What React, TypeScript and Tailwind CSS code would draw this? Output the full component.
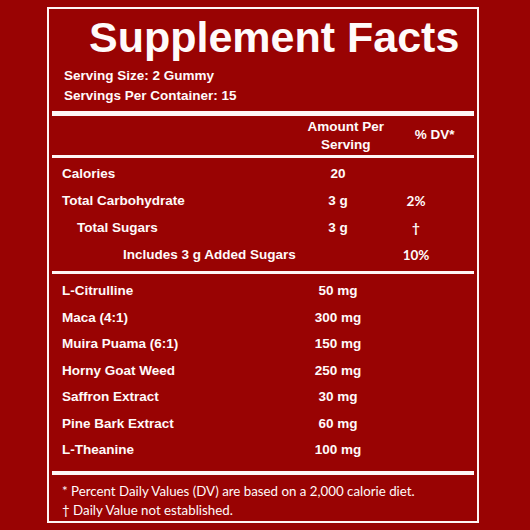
const facts = [
  { label: 'Calories', amount: '20', dv: '', indent: 'pl-[10px]' },
  { label: 'Total Carbohydrate', amount: '3 g', dv: '2%', indent: 'pl-[10px]' },
  { label: 'Total Sugars', amount: '3 g', dv: '†', indent: 'pl-[25px]' },
  { label: 'Includes 3 g Added Sugars', amount: '', dv: '10%', indent: 'pl-[71px]' },
];

const ingredients = [
  { label: 'L-Citrulline', amount: '50 mg' },
  { label: 'Maca (4:1)', amount: '300 mg' },
  { label: 'Muira Puama (6:1)', amount: '150 mg' },
  { label: 'Horny Goat Weed', amount: '250 mg' },
  { label: 'Saffron Extract', amount: '30 mg' },
  { label: 'Pine Bark Extract', amount: '60 mg' },
  { label: 'L-Theanine', amount: '100 mg' },
];

export default function App() {
  return (
    <div className="w-[530px] h-[530px] bg-[#990303] pt-[7px] pl-[47px] font-['Liberation_Sans',Arial,sans-serif] text-[#fffafa]">
      <div className="w-[432px] h-[516px] border-2 border-[#fff5f5] flex flex-col">
        {/* Title */}
        <h1 className="mt-[7px] pl-[40px] text-[43px] leading-[43px] font-bold">
          Supplement Facts
        </h1>
        <div className="mt-[7px] pl-[15px] text-[13.5px] font-bold">
          <p className="h-[20px] leading-[20px]">Serving Size: 2 Gummy</p>
          <p className="h-[20px] leading-[20px]">Servings Per Container: 15</p>
        </div>

        <div className="px-[3px] mt-[5px]">
          <div className="h-[5px] bg-[#fff5f5]" />

          {/* Header */}
          <div className="flex h-[39px] items-center text-[13.5px] font-bold">
            <div className="w-[248px]" />
            <div className="w-[100px] text-center leading-[18px]">
              Amount Per
              <br />
              Serving
            </div>
            <div className="w-[80px] text-center">% DV*</div>
          </div>
          <div className="h-[3px] bg-[#fff5f5]" />

          {/* Nutrition rows */}
          <div className="mt-[3px] text-[13.5px] font-bold">
            {facts.map((f) => (
              <div key={f.label} className="flex h-[27px] items-center">
                <div className={`w-[246px] ${f.indent}`}>{f.label}</div>
                <div className="w-[80px] text-center">{f.amount}</div>
                <div className="w-[76px] text-center font-['Lato',sans-serif] text-[#fffafa]">{f.dv}</div>
              </div>
            ))}
          </div>
          <div className="mt-[2px] h-[3px] bg-[#fff5f5]" />

          {/* Ingredients */}
          <div className="mt-[4px] text-[13.5px] font-bold">
            {ingredients.map((i) => (
              <div key={i.label} className="flex h-[26.5px] items-center">
                <div className="w-[246px] pl-[10px]">{i.label}</div>
                <div className="w-[80px] text-center">{i.amount}</div>
              </div>
            ))}
          </div>
          <div className="mt-[7px] h-[4px] bg-[#fff5f5]" />

          {/* Footnotes */}
          <div className="mt-[7px] pl-[10px] font-['Lato',sans-serif] text-[13.3px] leading-[19px]">
            <p>* Percent Daily Values (DV) are based on a 2,000 calorie diet.</p>
            <p>† Daily Value not established.</p>
          </div>
        </div>
      </div>
    </div>
  );
}
